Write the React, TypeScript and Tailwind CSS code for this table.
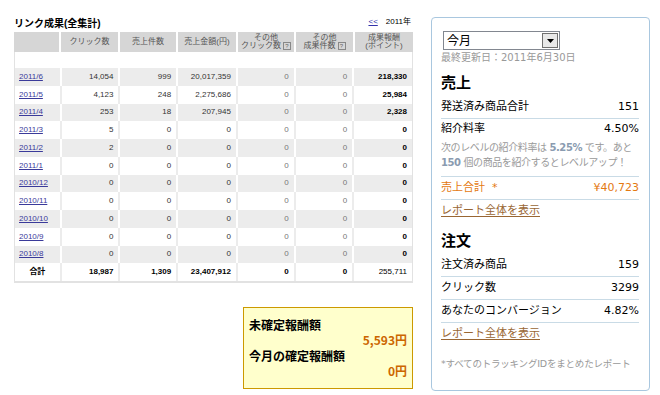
import React from "react";

type Row = {
  month: string;
  clicks: string;
  orders: string;
  sales: string;
  otherClicks: string;
  otherOrders: string;
  reward: string;
};

const rows: Row[] = [
  { month: "2011/6", clicks: "14,054", orders: "999", sales: "20,017,359", otherClicks: "0", otherOrders: "0", reward: "218,330" },
  { month: "2011/5", clicks: "4,123", orders: "248", sales: "2,275,686", otherClicks: "0", otherOrders: "0", reward: "25,984" },
  { month: "2011/4", clicks: "253", orders: "18", sales: "207,945", otherClicks: "0", otherOrders: "0", reward: "2,328" },
  { month: "2011/3", clicks: "5", orders: "0", sales: "0", otherClicks: "0", otherOrders: "0", reward: "0" },
  { month: "2011/2", clicks: "2", orders: "0", sales: "0", otherClicks: "0", otherOrders: "0", reward: "0" },
  { month: "2011/1", clicks: "0", orders: "0", sales: "0", otherClicks: "0", otherOrders: "0", reward: "0" },
  { month: "2010/12", clicks: "0", orders: "0", sales: "0", otherClicks: "0", otherOrders: "0", reward: "0" },
  { month: "2010/11", clicks: "0", orders: "0", sales: "0", otherClicks: "0", otherOrders: "0", reward: "0" },
  { month: "2010/10", clicks: "0", orders: "0", sales: "0", otherClicks: "0", otherOrders: "0", reward: "0" },
  { month: "2010/9", clicks: "0", orders: "0", sales: "0", otherClicks: "0", otherOrders: "0", reward: "0" },
  { month: "2010/8", clicks: "0", orders: "0", sales: "0", otherClicks: "0", otherOrders: "0", reward: "0" },
];

const widths = ["w-[47px]", "w-[59px]", "w-[58px]", "w-[60px]", "w-[58px]", "w-[59px]", "w-[58px]"];

function Help() {
  return (
    <span className="inline-flex items-center justify-center w-[8px] h-[8px] ml-[2px] border border-[#888] text-[6px] leading-none text-[#666] align-middle">
      ?
    </span>
  );
}

function StatRow({ label, value, last }: { label: string; value: string; last?: boolean }) {
  return (
    <div className={`flex items-center justify-between h-[23px] ${last ? "" : "border-b border-[#c9dbe6]"}`}>
      <span>{label}</span>
      <span>{value}</span>
    </div>
  );
}

export default function App() {
  const font = { fontFamily: '"Liberation Sans", "Noto Sans CJK JP", sans-serif' };
  const panelFont = { fontFamily: '"DejaVu Sans", "Noto Sans CJK JP", sans-serif' };

  return (
    <div className="w-[660px] h-[395px] bg-white flex text-black overflow-hidden" style={font}>
      {/* left: report table */}
      <div className="w-[399px] ml-[14px] pt-[14px] flex flex-col">
        <div className="flex items-end justify-between h-[17px]">
          <span className="text-[10px] font-bold leading-none mb-[2px]">リンク成果(全集計)</span>
          <span className="text-[8px] leading-none mb-[5px] mr-[2px]">
            <span className="text-[#3333aa] underline mr-[8px]">&lt;&lt;</span>2011年
          </span>
        </div>

        <div className="flex h-[20px] bg-[#d6d6d6] text-[8px] leading-[8px] text-[#555] mt-[1px]">
          {["", "クリック数", "売上件数", "売上金額(円)", "その他|クリック数", "その他|成果件数", "成果報酬|(ポイント)"].map((h, i) => (
            <div
              key={i}
              className={`${widths[i]} flex flex-col items-center justify-center ${i < 6 ? "border-r-2 border-white" : ""}`}
            >
              {h.split("|").map((p, j) => (
                <span key={j}>
                  {p}
                  {j === 1 && (i === 4 || i === 5) && <Help />}
                </span>
              ))}
            </div>
          ))}
        </div>

        <div className="h-[16px] border-l border-r border-[#e2e2e2]" />

        <div className="border-l border-r border-b-2 border-[#e2e2e2] text-[8px]">
          {rows.map((r, i) => {
            const gray = i % 2 === 0;
            const sep = gray ? "border-white" : "border-[#ececec]";
            const vals = [r.clicks, r.orders, r.sales, r.otherClicks, r.otherOrders];
            return (
              <div key={r.month} className={`flex h-[17.75px] ${gray ? "bg-[#ececec]" : "bg-white"}`}>
                <div className={`${widths[0]} border-r-2 ${sep} flex items-center pl-[4px]`}>
                  <a className="text-[#3a3a9a] underline">{r.month}</a>
                </div>
                {vals.map((v, j) => (
                  <div
                    key={j}
                    className={`${widths[j + 1]} border-r-2 ${sep} flex items-center justify-end pr-[5px] ${
                      j >= 3 ? "text-[#777]" : "text-[#333]"
                    }`}
                  >
                    {v}
                  </div>
                ))}
                <div className={`${widths[6]} flex items-center justify-end pr-[5px] font-bold`}>{r.reward}</div>
              </div>
            );
          })}
          <div className="flex h-[17.75px] bg-white font-bold">
            <div className={`${widths[0]} border-r-2 border-[#ececec] flex items-center justify-center`}>合計</div>
            {["18,987", "1,309", "23,407,912", "0", "0"].map((v, j) => (
              <div key={j} className={`${widths[j + 1]} border-r-2 border-[#ececec] flex items-center justify-end pr-[5px]`}>
                {v}
              </div>
            ))}
            <div className={`${widths[6]} flex items-center justify-end pr-[5px] font-normal`}>255,711</div>
          </div>
        </div>

        {/* pending reward box */}
        <div
          className="self-end mt-[24px] w-[170px] h-[82px] bg-[#ffffcc] border border-[#cc9900] px-[5px] pt-[9px] text-[12px] font-bold leading-[15px]"
          style={{ fontFamily: '"Noto Sans CJK JP", sans-serif' }}
        >
          <div>未確定報酬額</div>
          <div className="text-right text-[#cc6600]">5,593円</div>
          <div className="mt-[1px]">今月の確定報酬額</div>
          <div className="text-right text-[#cc6600]">0円</div>
        </div>
      </div>

      {/* right: summary panel */}
      <div
        className="ml-[18px] mt-[17px] w-[219px] h-[374px] border border-[#a9c7df] rounded-[4px] pl-[9px] pr-[10px] pt-[13px] text-[11px] flex flex-col"
        style={panelFont}
      >
        <div className="ml-[2px] w-[117px] h-[19px] border border-[#828790] flex items-center bg-white">
          <span className="flex-1 pl-[3px] text-[12px] leading-none">今月</span>
          <span className="w-[16px] h-[15px] mr-[1px] bg-[#e8e8e8] border border-[#707070] flex items-center justify-center">
            <svg width="7" height="4" viewBox="0 0 7 4">
              <path d="M0 0h7L3.5 4z" fill="#000" />
            </svg>
          </span>
        </div>
        <div className="text-[10px] text-[#999] leading-none mt-[3px]">最終更新日：2011年6月30日</div>

        <div className="text-[15px] font-bold leading-none mt-[13px] mb-[5px]">売上</div>
        <StatRow label="発送済み商品合計" value="151" />
        <div className="border-b border-[#c9dbe6] pb-[6px]">
          <div className="flex items-center justify-between h-[21px]">
            <span>紹介料率</span>
            <span>4.50%</span>
          </div>
          <div className="text-[#999] text-[10px] leading-[15px] tracking-[-0.4px] whitespace-nowrap">
            <div>
              次のレベルの紹介料率は <b className="text-[#8a9bb0]">5.25%</b> です。あと
            </div>
            <div>
              <b className="text-[#8a9bb0]">150</b> 個の商品を紹介するとレベルアップ！
            </div>
          </div>
        </div>
        <div className="flex items-center justify-between h-[23px] border-b border-[#c9dbe6] text-[#e47911]">
          <span>売上合計 &nbsp;*</span>
          <span>¥40,723</span>
        </div>
        <div className="h-[23px] flex items-center">
          <a className="text-[#996633] underline underline-offset-2">レポート全体を表示</a>
        </div>

        <div className="text-[15px] font-bold leading-none mt-[11px] mb-[5px]">注文</div>
        <StatRow label="注文済み商品" value="159" />
        <StatRow label="クリック数" value="3299" />
        <StatRow label="あなたのコンバージョン" value="4.82%" />
        <div className="h-[22px] flex items-center">
          <a className="text-[#996633] underline underline-offset-2">レポート全体を表示</a>
        </div>
        <div className="text-[9.5px] text-[#999] mt-[12px] whitespace-nowrap tracking-[-0.2px]">
          *すべてのトラッキングIDをまとめたレポート
        </div>
      </div>
    </div>
  );
}
